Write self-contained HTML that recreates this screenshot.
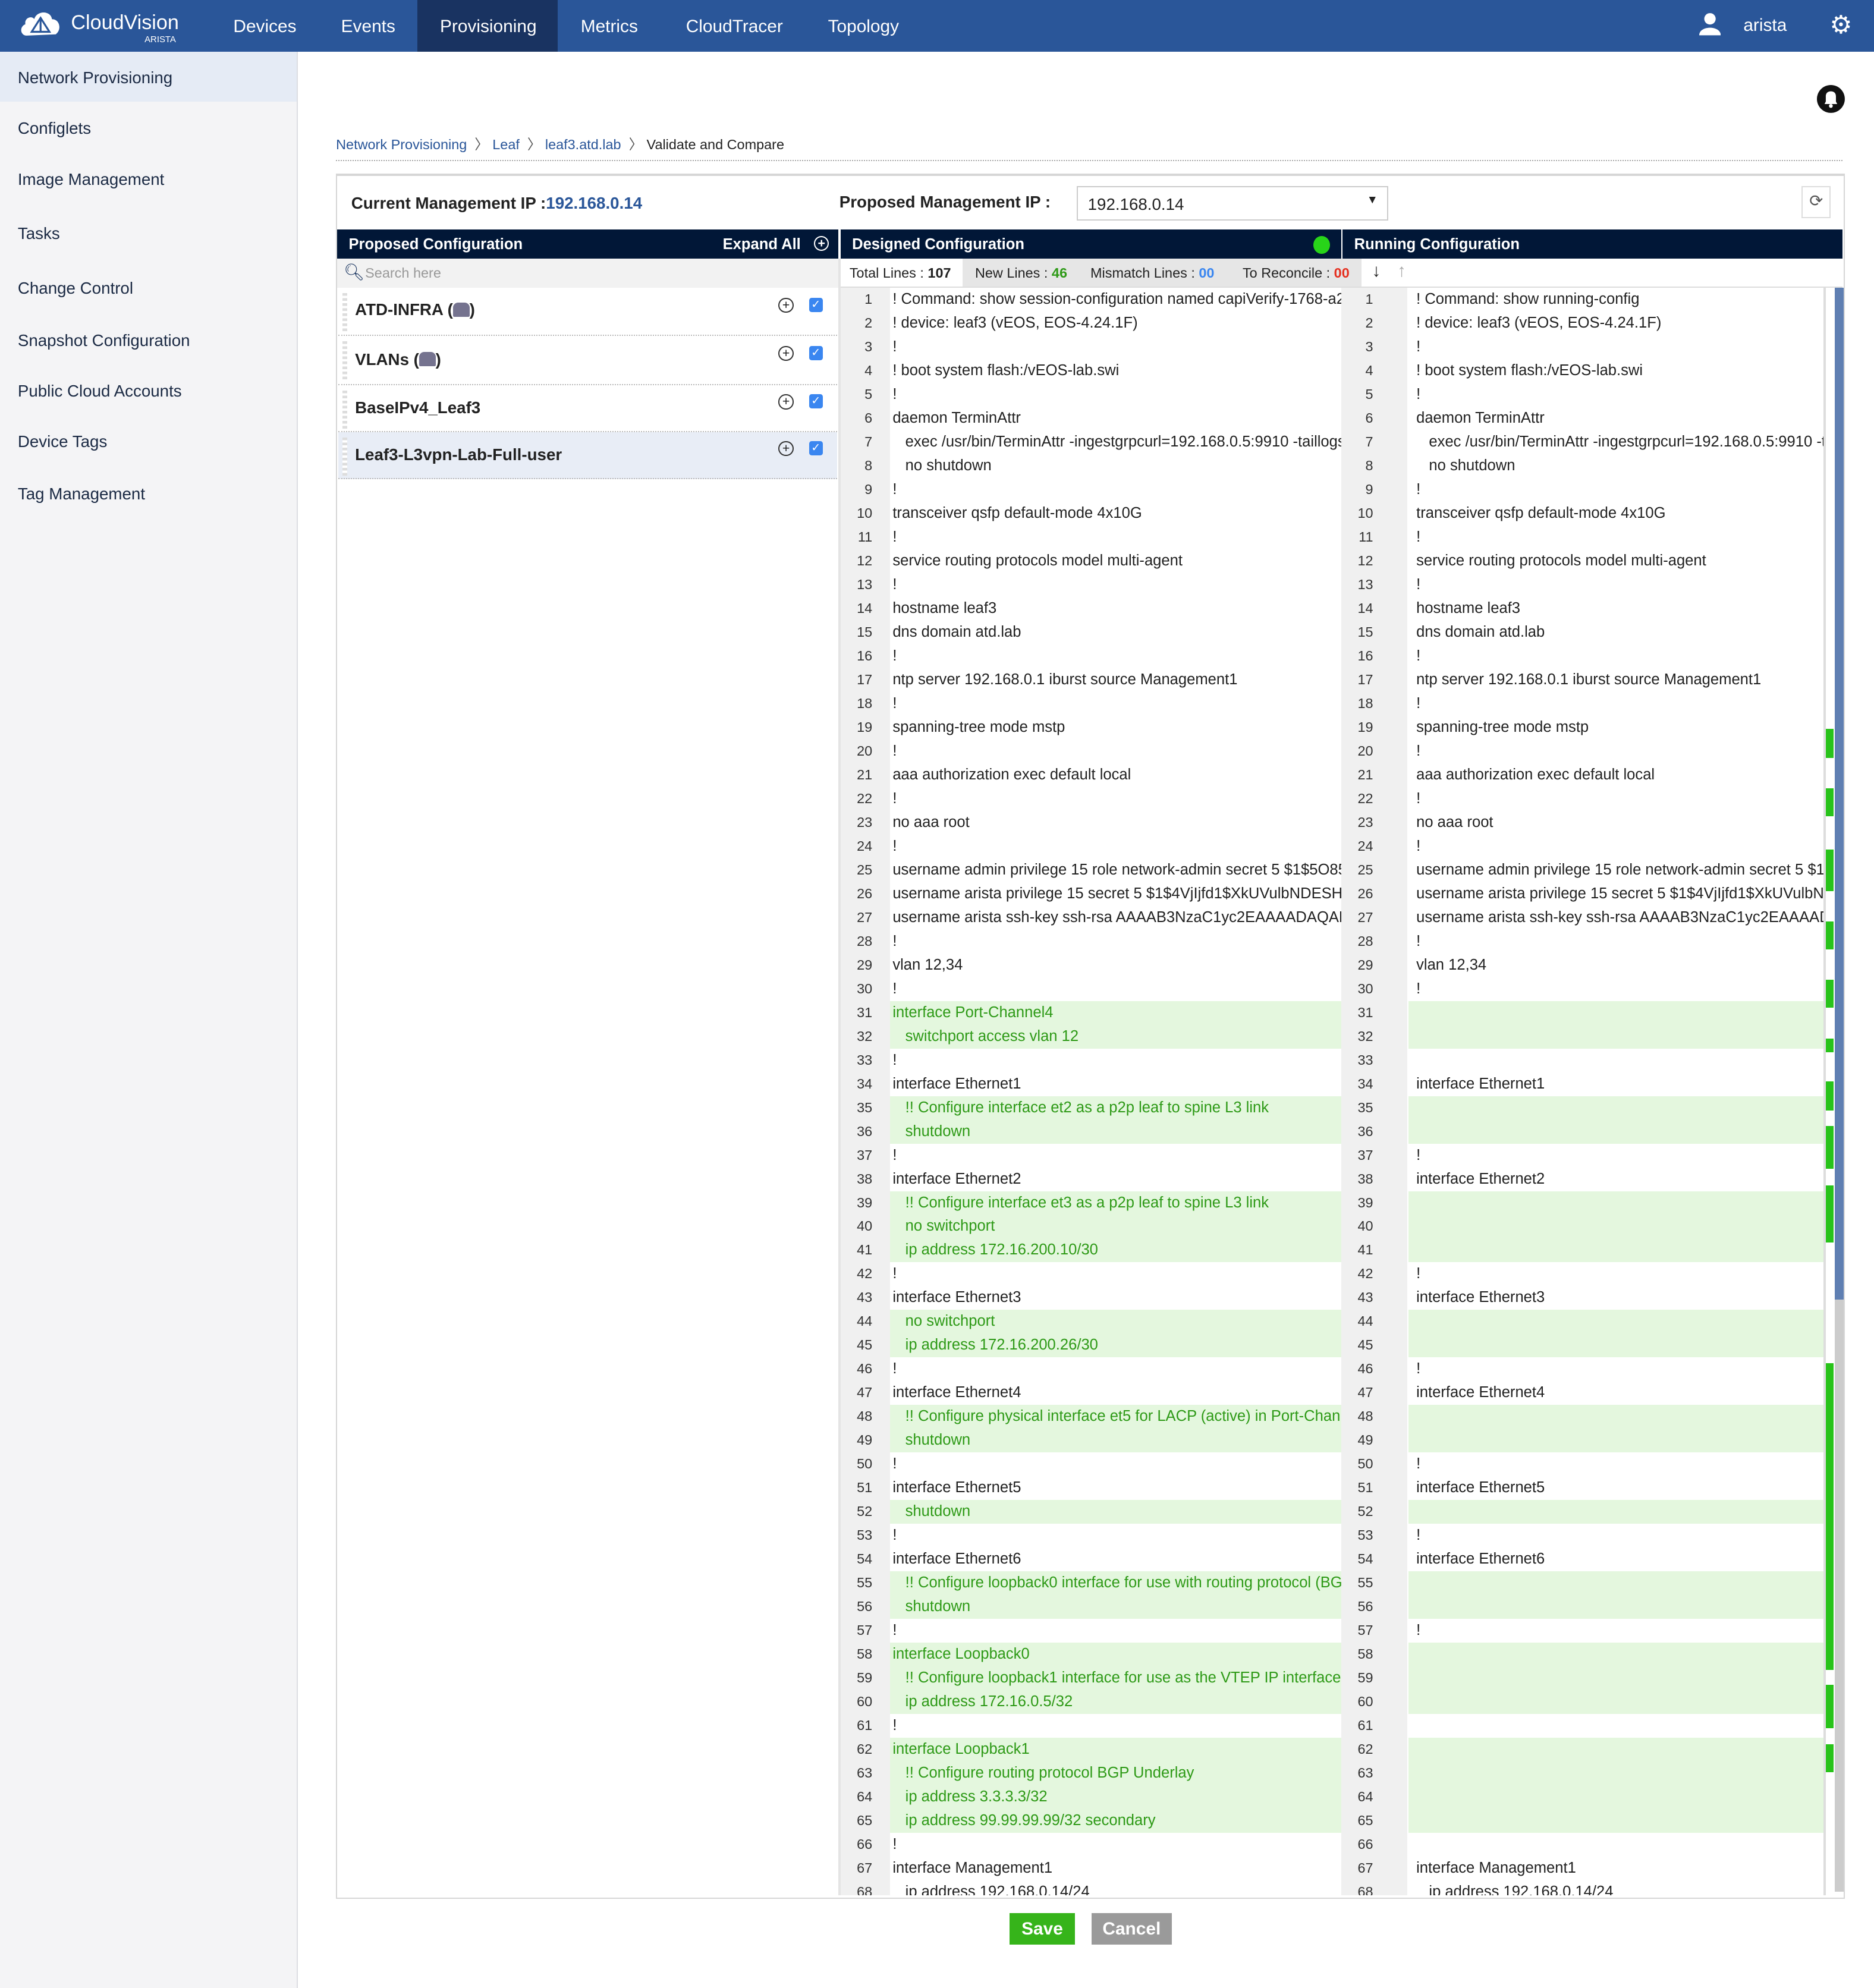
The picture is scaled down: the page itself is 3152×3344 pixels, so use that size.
<!DOCTYPE html>
<html><head><meta charset="utf-8"><style>
body{margin:0;width:3152px;height:3344px;overflow:hidden;background:#fff;font-family:"Liberation Sans",Arial,sans-serif}
#w{zoom:2.1326;width:1478px;height:1568px;position:relative;color:#222}
.a{position:absolute}
.nav{left:0;top:0;width:1478px;height:41px;background:#2a5699;color:#fff}
.nav span{position:absolute;top:13px;font-size:14px}
.side{left:0;top:41px;width:234px;height:1527px;background:#f4f4f6;border-right:1px solid #dcdde2}
.side div{position:absolute;left:14px;font-size:13px;color:#1b2a44}
.hdr{top:181px;height:23px;background:#011737;color:#fff;font-size:12px;font-weight:bold}
.hdr b{position:absolute;top:5px}
.code{top:227px;height:1268px;overflow:hidden;font-size:12px}
.code div{height:18.75px;line-height:18.75px;white-space:nowrap;position:relative}
.code i{font-style:normal;position:absolute;left:0;top:0;text-align:right;color:#333;font-size:11px}
.code s{text-decoration:none;position:absolute;top:0}
#L i{width:25px}#L s{left:41px}
#R i{width:24px}#R s{left:58px}
.g s{color:#2e9a17}
#L .g{background:linear-gradient(to right,transparent 39px,#e4f7de 39px)}
#R .g{background:linear-gradient(to right,transparent 52px,#e4f7de 52px)}
.item{left:267px;width:393px;border-bottom:1px dotted #bbb;font-size:13px;font-weight:bold}
.item span.t{position:absolute;left:13px}
.pl{position:absolute;left:347px;width:10px;height:10px;border:1px solid #333;border-radius:50%;font-size:10px;line-height:10px;text-align:center;font-weight:normal}
.cb{position:absolute;left:371px;width:11px;height:11px;background:#3a86f0;border-radius:2px;color:#fff;font-size:9px;line-height:11px;text-align:center;font-weight:normal}
.db{display:inline-block;width:13px;height:11px;background:#75738f;border-radius:4px 4px 1px 1px;vertical-align:-1px}
.grip{position:absolute;left:3px;width:4px;background:repeating-linear-gradient(#ddd 0 2px,#fff 2px 4px)}
.mk{position:absolute;left:1440px;width:6px;background:#28c31a}
</style></head><body><div id="w">
<div class="a nav">
 <svg class="a" style="left:15px;top:6px" width="34" height="24" viewBox="0 0 34 24"><path d="M6 22 C1 22 0 15 5 13 C4 8 10 6 12 9 C14 2 25 2 26 9 C32 9 34 17 29 21 Z" fill="#fff"/><path d="M10 19 L17 8 L24 19 Z M17 8 L17 19" stroke="#2a5699" stroke-width="1.5" fill="none"/></svg>
 <span style="left:56px;top:9px;font-size:16px">CloudVision</span>
 <span style="left:114px;top:27px;font-size:7px">ARISTA</span>
 <span style="left:184px">Devices</span>
 <span style="left:269px">Events</span>
 <div class="a" style="left:329px;top:0;width:111px;height:41px;background:#193361"></div>
 <span style="left:347px">Provisioning</span>
 <span style="left:458px">Metrics</span>
 <span style="left:541px">CloudTracer</span>
 <span style="left:653px">Topology</span>
 <svg class="a" style="left:1340px;top:10px" width="17" height="18" viewBox="0 0 17 18"><circle cx="8.5" cy="5" r="4.5" fill="#fff"/><path d="M0 18 C0 10 17 10 17 18Z" fill="#fff"/></svg>
 <span style="left:1375px;top:12px">arista</span>
 <span style="left:1443px;top:8px;font-size:20px">⚙</span>
</div>
<div class="a side">
 <div style="left:0;top:0;width:234px;height:39px;background:#e5ebf5"></div>
 <div style="top:13px">Network Provisioning</div>
 <div style="top:53px">Configlets</div>
 <div style="top:93px">Image Management</div>
 <div style="top:136px">Tasks</div>
 <div style="top:179px">Change Control</div>
 <div style="top:220px">Snapshot Configuration</div>
 <div style="top:260px">Public Cloud Accounts</div>
 <div style="top:300px">Device Tags</div>
 <div style="top:341px">Tag Management</div>
</div>
<svg class="a" style="left:1433px;top:67px" width="22" height="22" viewBox="0 0 22 22"><circle cx="11" cy="11" r="11" fill="#111"/><path d="M6 15 L16 15 L15 13 L15 9 C15 6 13 5 11 5 C9 5 7 6 7 9 L7 13 Z" fill="#fff"/><circle cx="11" cy="16.5" r="1.5" fill="#fff"/></svg>
<div class="a" style="left:265px;top:105px;font-size:11px;color:#2a5699">Network Provisioning <span style="color:#555">&nbsp;〉&nbsp;</span>Leaf <span style="color:#555">&nbsp;〉&nbsp;</span>leaf3.atd.lab <span style="color:#555">&nbsp;〉&nbsp;</span><span style="color:#222">Validate and Compare</span></div>
<div class="a" style="left:265px;top:126px;width:1188px;border-top:1px dotted #aaa"></div>
<div class="a" style="left:265px;top:137px;width:1188px;height:1358px;border:1px solid #d6d6d6;border-top:2px solid #d6d6d6"></div>
<div class="a" style="left:277px;top:153px;font-size:13px;font-weight:bold">Current Management IP :<span style="color:#2a5699">192.168.0.14</span></div>
<div class="a" style="left:662px;top:152px;font-size:13px;font-weight:bold">Proposed Management IP :</div>
<div class="a" style="left:849px;top:147px;width:244px;height:25px;border:1px solid #ccc;font-size:13px"><span class="a" style="left:8px;top:6px">192.168.0.14</span><span class="a" style="left:228px;top:5px;font-size:9px">▼</span></div>
<div class="a" style="left:1421px;top:147px;width:21px;height:23px;border:1px solid #ddd;font-size:13px;text-align:center;line-height:22px;color:#555">⟳</div>
<div class="a hdr" style="left:266px;width:395px"><b style="left:9px">Proposed Configuration</b><b style="left:304px">Expand All</b><span class="a" style="left:376px;top:5px;width:10px;height:10px;border:1px solid #fff;border-radius:50%;font-size:10px;line-height:10px;text-align:center">+</span></div>
<div class="a hdr" style="left:663px;width:395px"><b style="left:9px">Designed Configuration</b><span class="a" style="left:373px;top:5px;width:13px;height:14px;border-radius:50%;background:#28d419"></span></div>
<div class="a hdr" style="left:1059px;width:394px"><b style="left:9px">Running Configuration</b></div>
<div class="a" style="left:266px;top:204px;width:395px;height:23px;background:#f2f2f2;font-size:11px;color:#999"><span class="a" style="left:5px;top:3px;color:#1a3560;font-size:13px">&#x1F50D;&#xFE0E;</span><span class="a" style="left:22px;top:5px">Search here</span></div>
<div class="a" style="left:663px;top:204px;width:790px;height:22px;font-size:11px;border-bottom:1px solid #ddd">
 <span class="a" style="left:7px;top:5px">Total Lines : <b>107</b></span>
 <div class="a" style="left:96px;top:0;width:315px;height:22px;background:#e6e6e6"></div>
 <span class="a" style="left:106px;top:5px">New Lines : <b style="color:#2e9a17">46</b></span>
 <span class="a" style="left:197px;top:5px">Mismatch Lines : <b style="color:#3a86f0">00</b></span>
 <span class="a" style="left:317px;top:5px">To Reconcile : <b style="color:#e53020">00</b></span>
 <span class="a" style="left:419px;top:2px;font-size:14px;font-weight:bold">↓</span>
 <span class="a" style="left:439px;top:2px;font-size:14px;color:#aaa">↑</span>
</div>
<div class="a item" style="top:227px;height:37px"><div class="grip" style="top:4px;height:30px"></div><span class="t" style="top:10px">ATD-INFRA (<span class="db"></span>)</span><span class="pl" style="top:8px">+</span><span class="cb" style="top:8px">✓</span></div>
<div class="a item" style="top:265px;height:38px"><div class="grip" style="top:4px;height:30px"></div><span class="t" style="top:11px">VLANs (<span class="db"></span>)</span><span class="pl" style="top:8px">+</span><span class="cb" style="top:8px">✓</span></div>
<div class="a item" style="top:304px;height:36px"><div class="grip" style="top:4px;height:30px"></div><span class="t" style="top:10px">BaseIPv4_Leaf3</span><span class="pl" style="top:7px">+</span><span class="cb" style="top:7px">✓</span></div>
<div class="a item" style="top:341px;height:36px;background:#e8edf6"><div class="grip" style="top:4px;height:30px"></div><span class="t" style="top:10px">Leaf3-L3vpn-Lab-Full-user</span><span class="pl" style="top:7px">+</span><span class="cb" style="top:7px">✓</span></div>
<div class="a" style="left:661px;top:204px;width:2px;height:1291px;background:#e4e4e4"></div>
<div class="a" style="left:663px;top:227px;width:39px;height:1268px;background:#f0f0f0"></div>
<div class="a" style="left:1058px;top:227px;width:52px;height:1268px;background:#f0f0f0"></div>
<div class="a" style="left:1438px;top:227px;width:2px;height:1268px;background:#ddd"></div>
<div class="a" style="left:1447px;top:227px;width:7px;height:1265px;background:#ccc"></div>
<div class="a" style="left:1447px;top:227px;width:7px;height:798px;background:#5f7fb2"></div>
<div class="mk" style="top:575px;height:23px"></div><div class="mk" style="top:622px;height:22px"></div><div class="mk" style="top:670px;height:33px"></div><div class="mk" style="top:727px;height:22px"></div><div class="mk" style="top:773px;height:22px"></div><div class="mk" style="top:819px;height:11px"></div><div class="mk" style="top:853px;height:23px"></div><div class="mk" style="top:888px;height:34px"></div><div class="mk" style="top:935px;height:45px"></div><div class="mk" style="top:1075px;height:242px"></div><div class="mk" style="top:1329px;height:34px"></div><div class="mk" style="top:1376px;height:22px"></div>
<div class="a code" id="L" style="left:663px;width:395px">
<div><i>1</i><s>! Command: show session-configuration named capiVerify-1768-a2f3c</s></div>
<div><i>2</i><s>! device: leaf3 (vEOS, EOS-4.24.1F)</s></div>
<div><i>3</i><s>!</s></div>
<div><i>4</i><s>! boot system flash:/vEOS-lab.swi</s></div>
<div><i>5</i><s>!</s></div>
<div><i>6</i><s>daemon TerminAttr</s></div>
<div><i>7</i><s>&nbsp;&nbsp; exec /usr/bin/TerminAttr -ingestgrpcurl=192.168.0.5:9910 -taillogs</s></div>
<div><i>8</i><s>&nbsp;&nbsp; no shutdown</s></div>
<div><i>9</i><s>!</s></div>
<div><i>10</i><s>transceiver qsfp default-mode 4x10G</s></div>
<div><i>11</i><s>!</s></div>
<div><i>12</i><s>service routing protocols model multi-agent</s></div>
<div><i>13</i><s>!</s></div>
<div><i>14</i><s>hostname leaf3</s></div>
<div><i>15</i><s>dns domain atd.lab</s></div>
<div><i>16</i><s>!</s></div>
<div><i>17</i><s>ntp server 192.168.0.1 iburst source Management1</s></div>
<div><i>18</i><s>!</s></div>
<div><i>19</i><s>spanning-tree mode mstp</s></div>
<div><i>20</i><s>!</s></div>
<div><i>21</i><s>aaa authorization exec default local</s></div>
<div><i>22</i><s>!</s></div>
<div><i>23</i><s>no aaa root</s></div>
<div><i>24</i><s>!</s></div>
<div><i>25</i><s>username admin privilege 15 role network-admin secret 5 $1$5O85B</s></div>
<div><i>26</i><s>username arista privilege 15 secret 5 $1$4VjIjfd1$XkUVulbNDESHFzcx</s></div>
<div><i>27</i><s>username arista ssh-key ssh-rsa AAAAB3NzaC1yc2EAAAADAQABAAAB</s></div>
<div><i>28</i><s>!</s></div>
<div><i>29</i><s>vlan 12,34</s></div>
<div><i>30</i><s>!</s></div>
<div class="g"><i>31</i><s>interface Port-Channel4</s></div>
<div class="g"><i>32</i><s>&nbsp;&nbsp; switchport access vlan 12</s></div>
<div><i>33</i><s>!</s></div>
<div><i>34</i><s>interface Ethernet1</s></div>
<div class="g"><i>35</i><s>&nbsp;&nbsp; !! Configure interface et2 as a p2p leaf to spine L3 link</s></div>
<div class="g"><i>36</i><s>&nbsp;&nbsp; shutdown</s></div>
<div><i>37</i><s>!</s></div>
<div><i>38</i><s>interface Ethernet2</s></div>
<div class="g"><i>39</i><s>&nbsp;&nbsp; !! Configure interface et3 as a p2p leaf to spine L3 link</s></div>
<div class="g"><i>40</i><s>&nbsp;&nbsp; no switchport</s></div>
<div class="g"><i>41</i><s>&nbsp;&nbsp; ip address 172.16.200.10/30</s></div>
<div><i>42</i><s>!</s></div>
<div><i>43</i><s>interface Ethernet3</s></div>
<div class="g"><i>44</i><s>&nbsp;&nbsp; no switchport</s></div>
<div class="g"><i>45</i><s>&nbsp;&nbsp; ip address 172.16.200.26/30</s></div>
<div><i>46</i><s>!</s></div>
<div><i>47</i><s>interface Ethernet4</s></div>
<div class="g"><i>48</i><s>&nbsp;&nbsp; !! Configure physical interface et5 for LACP (active) in Port-Channel5</s></div>
<div class="g"><i>49</i><s>&nbsp;&nbsp; shutdown</s></div>
<div><i>50</i><s>!</s></div>
<div><i>51</i><s>interface Ethernet5</s></div>
<div class="g"><i>52</i><s>&nbsp;&nbsp; shutdown</s></div>
<div><i>53</i><s>!</s></div>
<div><i>54</i><s>interface Ethernet6</s></div>
<div class="g"><i>55</i><s>&nbsp;&nbsp; !! Configure loopback0 interface for use with routing protocol (BGP)</s></div>
<div class="g"><i>56</i><s>&nbsp;&nbsp; shutdown</s></div>
<div><i>57</i><s>!</s></div>
<div class="g"><i>58</i><s>interface Loopback0</s></div>
<div class="g"><i>59</i><s>&nbsp;&nbsp; !! Configure loopback1 interface for use as the VTEP IP interface</s></div>
<div class="g"><i>60</i><s>&nbsp;&nbsp; ip address 172.16.0.5/32</s></div>
<div><i>61</i><s>!</s></div>
<div class="g"><i>62</i><s>interface Loopback1</s></div>
<div class="g"><i>63</i><s>&nbsp;&nbsp; !! Configure routing protocol BGP Underlay</s></div>
<div class="g"><i>64</i><s>&nbsp;&nbsp; ip address 3.3.3.3/32</s></div>
<div class="g"><i>65</i><s>&nbsp;&nbsp; ip address 99.99.99.99/32 secondary</s></div>
<div><i>66</i><s>!</s></div>
<div><i>67</i><s>interface Management1</s></div>
<div><i>68</i><s>&nbsp;&nbsp; ip address 192.168.0.14/24</s></div>
</div>
<div class="a code" id="R" style="left:1059px;width:379px">
<div><i>1</i><s>! Command: show running-config</s></div>
<div><i>2</i><s>! device: leaf3 (vEOS, EOS-4.24.1F)</s></div>
<div><i>3</i><s>!</s></div>
<div><i>4</i><s>! boot system flash:/vEOS-lab.swi</s></div>
<div><i>5</i><s>!</s></div>
<div><i>6</i><s>daemon TerminAttr</s></div>
<div><i>7</i><s>&nbsp;&nbsp; exec /usr/bin/TerminAttr -ingestgrpcurl=192.168.0.5:9910 -taillogs</s></div>
<div><i>8</i><s>&nbsp;&nbsp; no shutdown</s></div>
<div><i>9</i><s>!</s></div>
<div><i>10</i><s>transceiver qsfp default-mode 4x10G</s></div>
<div><i>11</i><s>!</s></div>
<div><i>12</i><s>service routing protocols model multi-agent</s></div>
<div><i>13</i><s>!</s></div>
<div><i>14</i><s>hostname leaf3</s></div>
<div><i>15</i><s>dns domain atd.lab</s></div>
<div><i>16</i><s>!</s></div>
<div><i>17</i><s>ntp server 192.168.0.1 iburst source Management1</s></div>
<div><i>18</i><s>!</s></div>
<div><i>19</i><s>spanning-tree mode mstp</s></div>
<div><i>20</i><s>!</s></div>
<div><i>21</i><s>aaa authorization exec default local</s></div>
<div><i>22</i><s>!</s></div>
<div><i>23</i><s>no aaa root</s></div>
<div><i>24</i><s>!</s></div>
<div><i>25</i><s>username admin privilege 15 role network-admin secret 5 $1$5O85B</s></div>
<div><i>26</i><s>username arista privilege 15 secret 5 $1$4VjIjfd1$XkUVulbNDESHFzcx</s></div>
<div><i>27</i><s>username arista ssh-key ssh-rsa AAAAB3NzaC1yc2EAAAADAQABAAAB</s></div>
<div><i>28</i><s>!</s></div>
<div><i>29</i><s>vlan 12,34</s></div>
<div><i>30</i><s>!</s></div>
<div class="g"><i>31</i><s></s></div>
<div class="g"><i>32</i><s></s></div>
<div><i>33</i><s></s></div>
<div><i>34</i><s>interface Ethernet1</s></div>
<div class="g"><i>35</i><s></s></div>
<div class="g"><i>36</i><s></s></div>
<div><i>37</i><s>!</s></div>
<div><i>38</i><s>interface Ethernet2</s></div>
<div class="g"><i>39</i><s></s></div>
<div class="g"><i>40</i><s></s></div>
<div class="g"><i>41</i><s></s></div>
<div><i>42</i><s>!</s></div>
<div><i>43</i><s>interface Ethernet3</s></div>
<div class="g"><i>44</i><s></s></div>
<div class="g"><i>45</i><s></s></div>
<div><i>46</i><s>!</s></div>
<div><i>47</i><s>interface Ethernet4</s></div>
<div class="g"><i>48</i><s></s></div>
<div class="g"><i>49</i><s></s></div>
<div><i>50</i><s>!</s></div>
<div><i>51</i><s>interface Ethernet5</s></div>
<div class="g"><i>52</i><s></s></div>
<div><i>53</i><s>!</s></div>
<div><i>54</i><s>interface Ethernet6</s></div>
<div class="g"><i>55</i><s></s></div>
<div class="g"><i>56</i><s></s></div>
<div><i>57</i><s>!</s></div>
<div class="g"><i>58</i><s></s></div>
<div class="g"><i>59</i><s></s></div>
<div class="g"><i>60</i><s></s></div>
<div><i>61</i><s></s></div>
<div class="g"><i>62</i><s></s></div>
<div class="g"><i>63</i><s></s></div>
<div class="g"><i>64</i><s></s></div>
<div class="g"><i>65</i><s></s></div>
<div><i>66</i><s></s></div>
<div><i>67</i><s>interface Management1</s></div>
<div><i>68</i><s>&nbsp;&nbsp; ip address 192.168.0.14/24</s></div>
</div>
<div class="a" style="left:796px;top:1509px;width:52px;height:25px;background:#36b41a;color:#fff;font-size:14px;font-weight:bold;text-align:center;line-height:25px">Save</div>
<div class="a" style="left:861px;top:1509px;width:63px;height:25px;background:#9a9a9a;color:#fff;font-size:14px;font-weight:bold;text-align:center;line-height:25px">Cancel</div>
</div></body></html>
